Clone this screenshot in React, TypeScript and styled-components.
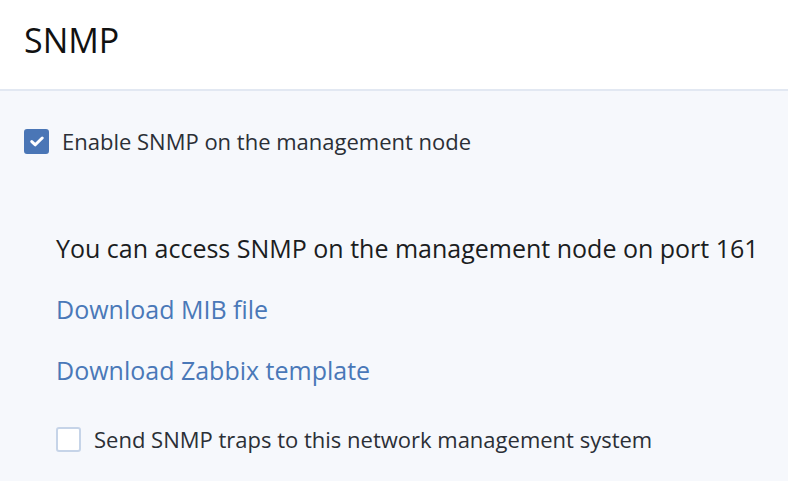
import React, { useState } from "react";
import styled, { createGlobalStyle } from "styled-components";

const GlobalStyle = createGlobalStyle`
  html, body {
    margin: 0;
    padding: 0;
    background: #f6f8fc;
    font-family: "Open Sans", "DejaVu Sans", sans-serif;
  }
`;

const Page = styled.div`
  width: 788px;
  height: 481px;
  overflow: hidden;
  background: #f6f8fc;
`;

const Header = styled.header`
  height: 91px;
  box-sizing: border-box;
  background: #ffffff;
  border-bottom: 2px solid #e2e8f2;
  display: flex;
  align-items: center;
  padding: 0 0 9px 24px;
`;

const Title = styled.h1`
  margin: 0;
  font-size: 34px;
  font-weight: 400;
  color: #111111;
`;

const Body = styled.div`
  padding: 35px 24px 0 24px;
  display: flex;
  flex-direction: column;
`;

const CheckRow = styled.label`
  display: flex;
  align-items: center;
  gap: 13px;
  font-size: 22px;
  line-height: 30px;
  color: #2b2f36;
  cursor: pointer;
`;

const Box = styled.span<{ $checked: boolean }>`
  width: 25px;
  height: 25px;
  flex-shrink: 0;
  box-sizing: border-box;
  border-radius: 3px;
  display: flex;
  align-items: center;
  justify-content: center;
  background: ${(p) => (p.$checked ? "#4a76b6" : "#ffffff")};
  border: 2px solid ${(p) => (p.$checked ? "#4a76b6" : "#c6d4e8")};
`;

const Details = styled.div`
  padding: 77px 0 0 32px;
  display: flex;
  flex-direction: column;
`;

const Info = styled.p`
  margin: 0;
  font-size: 25px;
  color: #1b1d21;
  line-height: 30px;
  white-space: nowrap;
`;

const Link = styled.a`
  font-size: 25px;
  line-height: 30px;
  color: #4a78b8;
  text-decoration: none;
  margin-top: 31px;
  width: fit-content;
`;

const SubCheck = styled.div`
  margin-top: 39px;
`;

const Checkbox = ({
  checked,
  onToggle,
  children,
}: {
  checked: boolean;
  onToggle: () => void;
  children: React.ReactNode;
}) => (
  <CheckRow onClick={onToggle}>
    <Box $checked={checked}>
      {checked && (
        <svg width="14" height="11" viewBox="0 0 14 11">
          <path
            d="M1.8 5.6 L5.3 8.8 L12.2 2"
            fill="none"
            stroke="#ffffff"
            strokeWidth="3"
            strokeLinecap="round"
            strokeLinejoin="round"
          />
        </svg>
      )}
    </Box>
    {children}
  </CheckRow>
);

const App = () => {
  const [enabled, setEnabled] = useState(true);
  const [traps, setTraps] = useState(false);

  return (
    <Page>
      <GlobalStyle />
      <Header>
        <Title>SNMP</Title>
      </Header>
      <Body>
        <Checkbox checked={enabled} onToggle={() => setEnabled(!enabled)}>
          Enable SNMP on the management node
        </Checkbox>
        <Details>
          <Info>You can access SNMP on the management node on port 161</Info>
          <Link href="#">Download MIB file</Link>
          <Link href="#">Download Zabbix template</Link>
          <SubCheck>
            <Checkbox checked={traps} onToggle={() => setTraps(!traps)}>
              Send SNMP traps to this network management system
            </Checkbox>
          </SubCheck>
        </Details>
      </Body>
    </Page>
  );
};

export default App;
